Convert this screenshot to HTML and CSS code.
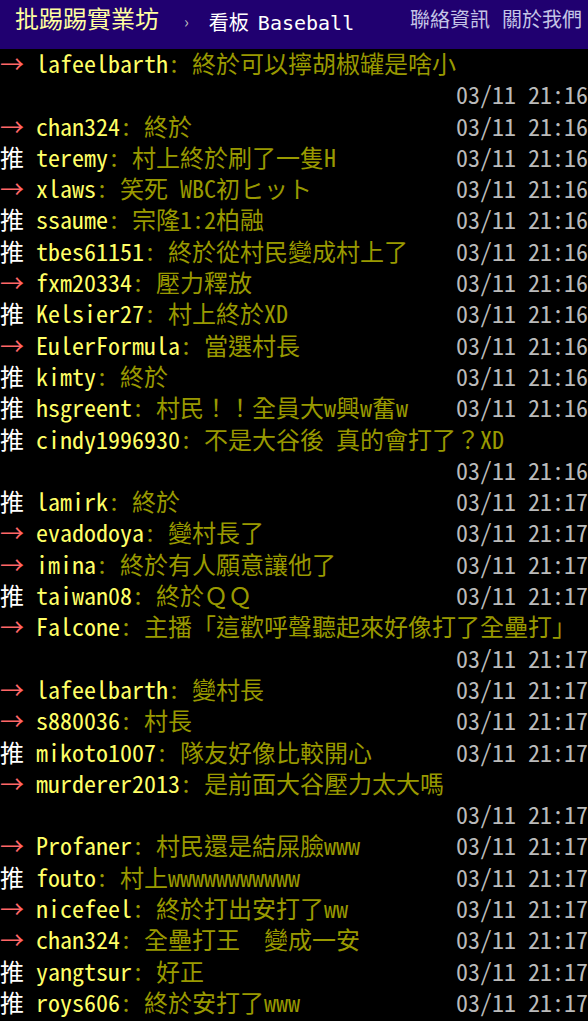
FILE: index.html
```html
<!DOCTYPE html>
<html lang="zh-Hant">
<head>
<meta charset="utf-8">
<title>Baseball - 批踢踢實業坊</title>
<link rel="stylesheet" href="styles.css">
</head>
<body>
<header class="topbar">
  <a class="site" href="#">批踢踢實業坊</a>
  <span class="sep">›</span>
  <a class="board" href="#"><span class="board-label">看板</span>Baseball</a>
  <nav class="links">
    <a href="#">聯絡資訊</a>
    <a href="#">關於我們</a>
  </nav>
</header>
<main class="screen">
  <div class="push wrap"><span class="tag arrow">→ </span><span class="uid">lafeelbarth</span><span class="msg">: 終於可以擰胡椒罐是啥小</span><span class="date">03/11 21:16</span></div>
  <div class="push"><span class="tag arrow">→ </span><span class="uid">chan324</span><span class="msg">: 終於</span><span class="date">03/11 21:16</span></div>
  <div class="push"><span class="tag good">推 </span><span class="uid">teremy</span><span class="msg">: 村上終於刷了一隻H</span><span class="date">03/11 21:16</span></div>
  <div class="push"><span class="tag arrow">→ </span><span class="uid">xlaws</span><span class="msg">: 笑死 WBC初ヒット</span><span class="date">03/11 21:16</span></div>
  <div class="push"><span class="tag good">推 </span><span class="uid">ssaume</span><span class="msg">: 宗隆1:2柏融</span><span class="date">03/11 21:16</span></div>
  <div class="push"><span class="tag good">推 </span><span class="uid">tbes61151</span><span class="msg">: 終於從村民變成村上了</span><span class="date">03/11 21:16</span></div>
  <div class="push"><span class="tag arrow">→ </span><span class="uid">fxm20334</span><span class="msg">: 壓力釋放</span><span class="date">03/11 21:16</span></div>
  <div class="push"><span class="tag good">推 </span><span class="uid">Kelsier27</span><span class="msg">: 村上終於XD</span><span class="date">03/11 21:16</span></div>
  <div class="push"><span class="tag arrow">→ </span><span class="uid">EulerFormula</span><span class="msg">: 當選村長</span><span class="date">03/11 21:16</span></div>
  <div class="push"><span class="tag good">推 </span><span class="uid">kimty</span><span class="msg">: 終於</span><span class="date">03/11 21:16</span></div>
  <div class="push"><span class="tag good">推 </span><span class="uid">hsgreent</span><span class="msg">: 村民！！全員大w興w奮w</span><span class="date">03/11 21:16</span></div>
  <div class="push wrap"><span class="tag good">推 </span><span class="uid">cindy1996930</span><span class="msg">: 不是大谷後 真的會打了？XD</span><span class="date">03/11 21:16</span></div>
  <div class="push"><span class="tag good">推 </span><span class="uid">lamirk</span><span class="msg">: 終於</span><span class="date">03/11 21:17</span></div>
  <div class="push"><span class="tag arrow">→ </span><span class="uid">evadodoya</span><span class="msg">: 變村長了</span><span class="date">03/11 21:17</span></div>
  <div class="push"><span class="tag arrow">→ </span><span class="uid">imina</span><span class="msg">: 終於有人願意讓他了</span><span class="date">03/11 21:17</span></div>
  <div class="push"><span class="tag good">推 </span><span class="uid">taiwan08</span><span class="msg">: 終於ＱＱ</span><span class="date">03/11 21:17</span></div>
  <div class="push wrap"><span class="tag arrow">→ </span><span class="uid">Falcone</span><span class="msg">: 主播「這歡呼聲聽起來好像打了全壘打」</span><span class="date">03/11 21:17</span></div>
  <div class="push"><span class="tag arrow">→ </span><span class="uid">lafeelbarth</span><span class="msg">: 變村長</span><span class="date">03/11 21:17</span></div>
  <div class="push"><span class="tag arrow">→ </span><span class="uid">s880036</span><span class="msg">: 村長</span><span class="date">03/11 21:17</span></div>
  <div class="push"><span class="tag good">推 </span><span class="uid">mikoto1007</span><span class="msg">: 隊友好像比較開心</span><span class="date">03/11 21:17</span></div>
  <div class="push wrap"><span class="tag arrow">→ </span><span class="uid">murderer2013</span><span class="msg">: 是前面大谷壓力太大嗎</span><span class="date">03/11 21:17</span></div>
  <div class="push"><span class="tag arrow">→ </span><span class="uid">Profaner</span><span class="msg">: 村民還是結屎臉www</span><span class="date">03/11 21:17</span></div>
  <div class="push"><span class="tag good">推 </span><span class="uid">fouto</span><span class="msg">: 村上wwwwwwwwwww</span><span class="date">03/11 21:17</span></div>
  <div class="push"><span class="tag arrow">→ </span><span class="uid">nicefeel</span><span class="msg">: 終於打出安打了ww</span><span class="date">03/11 21:17</span></div>
  <div class="push"><span class="tag arrow">→ </span><span class="uid">chan324</span><span class="msg">: 全壘打王　變成一安</span><span class="date">03/11 21:17</span></div>
  <div class="push"><span class="tag good">推 </span><span class="uid">yangtsur</span><span class="msg">: 好正</span><span class="date">03/11 21:17</span></div>
  <div class="push"><span class="tag good">推 </span><span class="uid">roys606</span><span class="msg">: 終於安打了www</span><span class="date">03/11 21:17</span></div>
</main>
</body>
</html>
```
FILE: styles.css
```css
html, body {
  margin: 0;
  padding: 0;
  background: #000;
}

body {
  width: 588px;
  overflow: hidden;
  font-family: "Noto Sans Mono CJK TC", "Noto Sans CJK TC", monospace;
}

a {
  text-decoration: none;
  color: inherit;
}

.topbar {
  display: flex;
  align-items: flex-start;
  height: 49px;
  background: #200070;
  padding: 0 6px 0 15px;
  box-sizing: border-box;
  font-family: "Noto Sans CJK TC", sans-serif;
}

.site {
  color: #ffffa0;
  font-size: 24px;
  line-height: 24px;
  padding-top: 6px;
}

.sep {
  color: #bbb;
  font-size: 16px;
  line-height: 16px;
  padding-top: 13px;
  margin: 0 20px 0 25px;
}

.board {
  color: #fff;
  font-size: 20px;
  line-height: 20px;
  padding-top: 12px;
  font-family: "DejaVu Sans Mono", "Noto Sans CJK TC", monospace;
}

.board-label {
  font-family: "Noto Sans CJK TC", sans-serif;
  margin-right: 9px;
}

.links {
  margin-left: auto;
  display: flex;
  gap: 12px;
  font-size: 20px;
  line-height: 20px;
  padding-top: 9px;
  color: #c4c4e6;
}

.screen {
  font-size: 24px;
  line-height: 31.3px;
  margin-top: -2px;
}

.push {
  display: flex;
  flex-wrap: wrap;
  white-space: pre;
}

.tag.arrow {
  color: #f66;
}

.tag.good {
  color: #fff;
}

.uid {
  color: #ff6;
}

.msg {
  color: #990;
}

.date {
  margin-left: auto;
  color: #bbb;
}

.push.wrap .date {
  flex-basis: 100%;
  text-align: right;
}
```
